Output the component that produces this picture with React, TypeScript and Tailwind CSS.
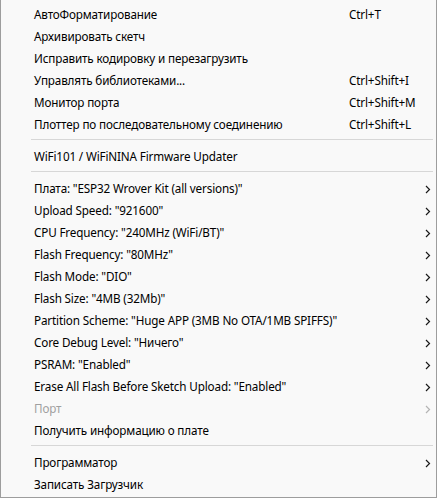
type Entry =
  | { kind: 'item'; label: string; shortcut?: string; sub?: boolean; disabled?: boolean }
  | { kind: 'sep' }

const entries: Entry[] = [
  { kind: 'item', label: 'АвтоФорматирование', shortcut: 'Ctrl+T' },
  { kind: 'item', label: 'Архивировать скетч' },
  { kind: 'item', label: 'Исправить кодировку и перезагрузить' },
  { kind: 'item', label: 'Управлять библиотеками...', shortcut: 'Ctrl+Shift+I' },
  { kind: 'item', label: 'Монитор порта', shortcut: 'Ctrl+Shift+M' },
  { kind: 'item', label: 'Плоттер по последовательному соединению', shortcut: 'Ctrl+Shift+L' },
  { kind: 'sep' },
  { kind: 'item', label: 'WiFi101 / WiFiNINA Firmware Updater' },
  { kind: 'sep' },
  { kind: 'item', label: 'Плата: "ESP32 Wrover Kit (all versions)"', sub: true },
  { kind: 'item', label: 'Upload Speed: "921600"', sub: true },
  { kind: 'item', label: 'CPU Frequency: "240MHz (WiFi/BT)"', sub: true },
  { kind: 'item', label: 'Flash Frequency: "80MHz"', sub: true },
  { kind: 'item', label: 'Flash Mode: "DIO"', sub: true },
  { kind: 'item', label: 'Flash Size: "4MB (32Mb)"', sub: true },
  { kind: 'item', label: 'Partition Scheme: "Huge APP (3MB No OTA/1MB SPIFFS)"', sub: true },
  { kind: 'item', label: 'Core Debug Level: "Ничего"', sub: true },
  { kind: 'item', label: 'PSRAM: "Enabled"', sub: true },
  { kind: 'item', label: 'Erase All Flash Before Sketch Upload: "Enabled"', sub: true },
  { kind: 'item', label: 'Порт', sub: true, disabled: true },
  { kind: 'item', label: 'Получить информацию о плате' },
  { kind: 'sep' },
  { kind: 'item', label: 'Программатор', sub: true },
  { kind: 'item', label: 'Записать Загрузчик' },
]

function Chevron({ disabled }: { disabled?: boolean }) {
  return (
    <svg width="6" height="9" viewBox="0 0 6 9" fill="none">
      <path
        d="M1 1 L4.5 4.5 L1 8"
        stroke={disabled ? '#b4b4b4' : '#1a1a1a'}
        strokeWidth="1.2"
      />
    </svg>
  )
}

export default function App() {
  return (
    <div
      className="w-[437px] h-[498px] bg-[#f9f9f9] border-l border-r border-b border-[#9d9d9d] pt-[4px] text-[11.7px] tracking-[-0.15px] text-black overflow-hidden"
      style={{ fontFamily: '"Noto Sans", "Open Sans", sans-serif' }}
    >
      {entries.map((e, i) =>
        e.kind === 'sep' ? (
          <div key={i} className="h-[10px] pl-[30px] pr-[3px] pt-[3px]">
            <div className="h-px bg-[#d7d7d7]" />
          </div>
        ) : (
          <div
            key={i}
            className={`flex items-center h-[22px] pl-[33px] pr-[5px] ${e.disabled ? 'text-[#a0a0a0]' : ''}`}
          >
            <span className="w-[315px] shrink-0 whitespace-nowrap">{e.label}</span>
            <span className="flex-1 whitespace-nowrap">{e.shortcut}</span>
            {e.sub && <Chevron disabled={e.disabled} />}
          </div>
        ),
      )}
    </div>
  )
}
